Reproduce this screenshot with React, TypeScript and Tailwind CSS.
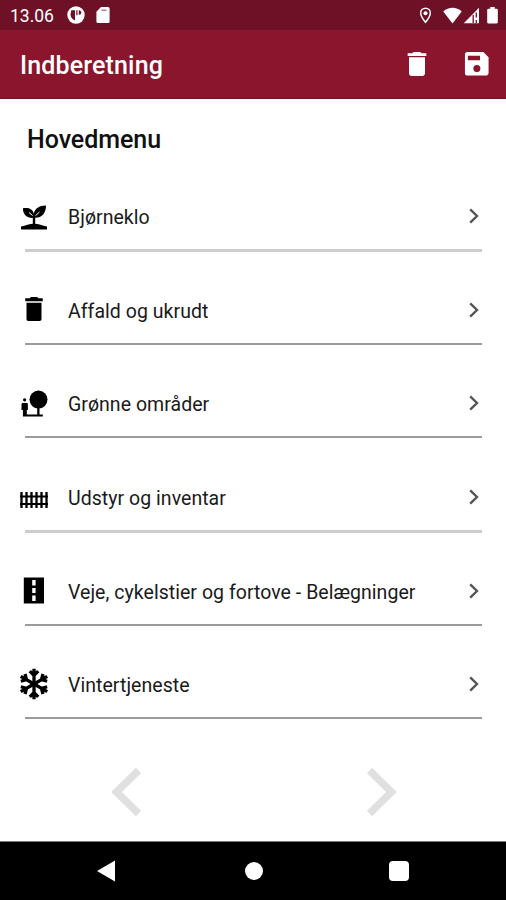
import type { ReactNode } from 'react';

interface MenuItem {
  label: string;
  icon: ReactNode;
  className: string;
}

const trashPath = 'M6 19c0 1.100.9 2 2 2h8c1.100 0 2-.9 2-2V7H6v12zM19 4h-3.500l-1-1h-5l-1 1H5v2h14V4z';

function SproutIcon() {
  return (
    <svg viewBox="0 0 28 28" className="mt-[3px] size-7">
      <path d="M1 23.400C6 22.800 9 20.800 14 20.800s8 2 13 2.600v3.200H1z" />
      <path d="M14 21.500v-8" stroke="#000" strokeWidth="2.400" />
      <path d="M13.800 14.800C7.500 15.500 3 12 2.900 5.200c5.800-1 9.900.8 10.900 5.500C15 5.500 19 2.500 26 2.500 26 10 22 15 15 14.800z" />
      <path d="M9 9.500l3.500 3M19.500 9l-4 3.700" stroke="#fff" strokeWidth="1" />
    </svg>
  );
}

function TrashIcon() {
  return (
    <svg viewBox="0 0 24 24" preserveAspectRatio="none" className="h-8 w-[31px]">
      <path d="M6 19.500c0 .9.600 1.500 1.500 1.500h9c.9 0 1.500-.6 1.500-1.500V7.300H6v12.200zM19 4h-3.500l-1-1h-5l-1 1H5v2.200h14V4z" />
    </svg>
  );
}

function TreeIcon() {
  return (
    <svg viewBox="0 0 28 28" className="mt-[3px] size-7">
      <circle cx="18.500" cy="9.600" r="9" />
      <circle cx="4.600" cy="9.800" r="1.600" />
      <path d="M1.500 14.500c0-.9.600-1.400 1.500-1.400h3.400c.9 0 1.500.5 1.500 1.400V20H6.800v4.400h10.400V18h2.300v6.400h3.300v2.200H2.900V20H1.500z" />
    </svg>
  );
}

function FenceIcon() {
  return (
    <svg viewBox="0 0 30 18" className="mt-2 h-[18px] w-[30px] shrink-0" stroke="#000" fill="none">
      <path d="M2.500 1v16M7.500 1v16M12.500 1v16M17.500 1v16M22.500 1v16M27.500 1v16" strokeWidth="2.300" />
      <path d="M1 5.500h28M1 13h28" strokeWidth="2" />
    </svg>
  );
}

function RoadIcon() {
  return (
    <svg viewBox="0 0 22 27" className="h-[27px] w-[22px]">
      <path d="M.8.500h20.200v26H.8z" />
      <path d="M9.200 3h3.400v5.500H9.200zM9.200 11h3.400v5H9.200zM9.200 18.500h3.400V24H9.200z" fill="#fff" />
    </svg>
  );
}

function SnowflakeIcon() {
  return (
    <svg viewBox="-15 -16 30 32" className="mt-0.5 h-8 w-[30px]" stroke="#000" strokeWidth="3.300" fill="none">
      {[0, 60, 120, 180, 240, 300].map((angle) => (
        <path key={angle} d="M0 0v-15.300M-4.200-12.800L0-8.600l4.200-4.200" transform={`rotate(${angle})`} />
      ))}
    </svg>
  );
}

const menuItems: MenuItem[] = [
  { label: 'Bjørneklo', icon: <SproutIcon />, className: 'h-[69px] border-b-3 border-[#cdcdcd]' },
  { label: 'Affald og ukrudt', icon: <TrashIcon />, className: 'h-[93px] border-b-2 border-[#9b9b9b]' },
  { label: 'Grønne områder', icon: <TreeIcon />, className: 'h-[93px] border-b-2 border-[#9b9b9b]' },
  { label: 'Udstyr og inventar', icon: <FenceIcon />, className: 'h-[95px] border-b-3 border-[#cdcdcd]' },
  { label: 'Veje, cykelstier og fortove - Belægninger', icon: <RoadIcon />, className: 'h-[93px] border-b-2 border-[#9b9b9b]' },
  { label: 'Vintertjeneste', icon: <SnowflakeIcon />, className: 'h-[93px] border-b-2 border-[#9b9b9b]' },
];

function StatusBar() {
  return (
    <div className="flex h-[30px] items-center bg-[#6f1126] pl-2.5 pr-2 text-white">
      <span className="w-[57px] pt-0.5 text-[17.500px]">13.06</span>
      <svg viewBox="0 0 18 18" className="size-[18px]">
        <circle cx="9" cy="9" r="8.700" fill="#fff" />
        <path d="M4.300 4.300h3.700v10.200C5.500 13.600 3.500 11.500 3.500 8.500zM9.300 4.300h1.200v5H9.300zM11.800 4.300c1.600 0 2.500 1 2.500 2.300s-.9 2.300-2.500 2.300z" fill="#6f1126" />
      </svg>
      <svg viewBox="0 0 14 16" className="ml-[11px] h-4 w-3.5" fill="#fff">
        <path d="M5 0h7a1.600 1.600 0 0 1 1.600 1.600v12.800A1.600 1.600 0 0 1 12 16H2a1.600 1.600 0 0 1-1.600-1.600V4.800z" />
        <path d="M5.500 3.200h5" stroke="#a36c7a" strokeWidth="1.300" />
      </svg>
      <div className="ml-auto flex items-center">
        <svg viewBox="0 0 14 18" className="mr-[11px] h-[17px] w-[13px]" fill="none" stroke="#fff" strokeWidth="1.600">
          <path d="M7 1.200c-3 0-5.200 2.200-5.200 5.100C1.800 10 7 16.300 7 16.300S12.200 10 12.200 6.300C12.200 3.400 10 1.200 7 1.200z" />
          <circle cx="7" cy="6.500" r="2.200" fill="#fff" stroke="none" />
        </svg>
        <svg viewBox="0 0 19 17" className="h-[17px] w-[19px]" fill="#fff">
          <path d="M9.500 16.500L.3 4.600C5.500-.4 13.500-.4 18.700 4.600z" />
        </svg>
        <svg viewBox="0 0 17 17" className="ml-px h-[17px] w-[17px]">
          <path d="M16 .8v15.400H.8z" fill="#fff" />
          <path d="M10.200 8v8M13.300 5.500v5M13.300 13v3" stroke="#6f1126" strokeWidth="1.300" />
        </svg>
        <svg viewBox="0 0 11 17" className="ml-[7px] h-[17px] w-[11px]" fill="#fff">
          <path d="M3.300 0h4.400v1.800H9.500a1.300 1.300 0 0 1 1.300 1.300v12.100a1.400 1.400 0 0 1-1.400 1.400H1.600a1.400 1.400 0 0 1-1.400-1.400V3.100a1.300 1.300 0 0 1 1.300-1.300h1.800z" />
        </svg>
      </div>
    </div>
  );
}

function AppBar() {
  return (
    <header className="flex h-[69px] items-center border-b border-[#701126] bg-[#8a152d] pl-5 pr-[13px] text-white">
      <h1 className="pt-1 text-[25px] font-medium tracking-[0.150px]">Indberetning</h1>
      <svg viewBox="0 0 24 24" className="ml-auto size-8" fill="#fff">
        <path d={trashPath} />
      </svg>
      <svg viewBox="0 0 24 24" className="ml-7 mr-px size-[31.500px]" fill="#fff">
        <path d="M17 3H5a2 2 0 0 0-2 2v14a2 2 0 0 0 2 2h14c1.100 0 2-.9 2-2V7l-4-4zm-2.200 12.700a2.700 2.700 0 1 1-5.400 0 2.700 2.700 0 0 1 5.400 0zM14.500 9.300H5.200V5.900h9.300V9.300z" fillRule="evenodd" />
      </svg>
    </header>
  );
}

function MenuRow({ label, icon, className }: MenuItem) {
  return (
    <li className={`flex items-end ${className}`}>
      <div className="flex h-[68px] w-full items-center">
        <div className="-ml-1.5 flex w-[30px] shrink-0 items-center justify-center">{icon}</div>
        <span className="ml-[19px] whitespace-nowrap pt-[5px] text-[19.500px] tracking-[0.040px] text-[#1a1a1a]">{label}</span>
        <svg viewBox="0 0 10 16" className="ml-auto mr-[3px] mt-0.5 h-4 w-2.5" fill="none" stroke="#555" strokeWidth="2.400">
          <path d="M1.200 1.300L8 8l-6.800 6.700" />
        </svg>
      </div>
    </li>
  );
}

export default function App() {
  return (
    <div className="flex h-[900px] w-[506px] flex-col overflow-hidden bg-white font-[Roboto,sans-serif]">
      <StatusBar />
      <AppBar />
      <main className="flex-1">
        <h2 className="ml-[27px] h-[84px] pt-[22px] text-[25px] font-medium tracking-[-0.050px] text-[#111]">Hovedmenu</h2>
        <ul className="ml-[25px] mr-6">
          {menuItems.map((item) => (
            <MenuRow key={item.label} {...item} />
          ))}
        </ul>
        <div className="mt-12 flex justify-between pl-[111px] pr-[109px]">
          <svg viewBox="0 0 30 50" className="h-[50px] w-[30px]" fill="none" stroke="#e0e0e0" strokeWidth="7.500">
            <path d="M27.500 3.500L5.500 25l22 21.500" />
          </svg>
          <svg viewBox="0 0 30 50" className="h-[50px] w-[30px]" fill="none" stroke="#e0e0e0" strokeWidth="7.500">
            <path d="M2.500 3.500L24.500 25l-22 21.500" />
          </svg>
        </div>
      </main>
      <nav className="flex h-[59px] items-center justify-between border-t border-[#777] bg-black px-[97px]">
        <svg viewBox="0 0 18 22" className="h-[22px] w-[18px]" fill="#fff">
          <path d="M0 11L18 .5v21z" />
        </svg>
        <div className="ml-[3px] size-[18px] rounded-full bg-white" />
        <div className="size-5 rounded-sm bg-white" />
      </nav>
    </div>
  );
}
